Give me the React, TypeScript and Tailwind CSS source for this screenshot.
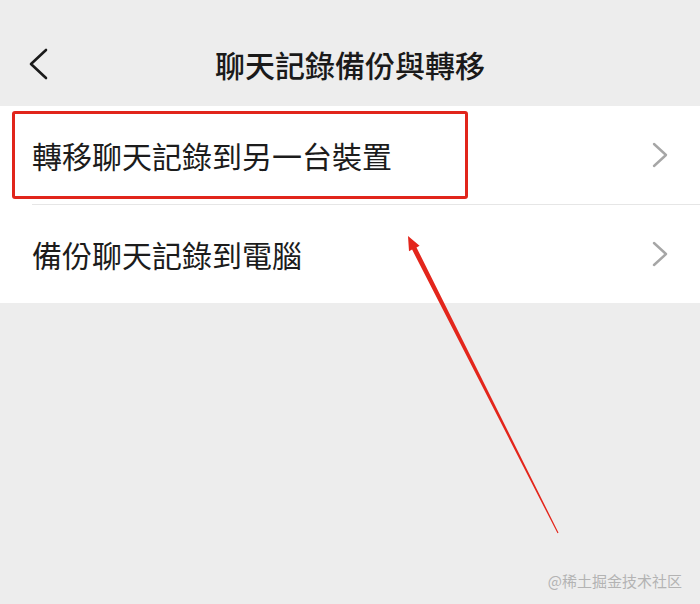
import React from 'react';

const font = { fontFamily: '"Noto Sans CJK TC", "Noto Sans CJK SC", sans-serif' };

function Chevron({ left = false }: { left?: boolean }) {
  if (left) {
    return (
      <svg width="20" height="32" viewBox="0 0 20 32" fill="none">
        <polyline points="17,2 2,16 17,30" stroke="#1a1a1a" strokeWidth="2.6" strokeLinecap="round" strokeLinejoin="round" />
      </svg>
    );
  }
  return (
    <svg width="16" height="26" viewBox="0 0 16 26" fill="none">
      <polyline points="2,2 14,13 2,24" stroke="#a6a6a6" strokeWidth="2.4" strokeLinecap="round" strokeLinejoin="round" />
    </svg>
  );
}

const rows = ['轉移聊天記錄到另一台裝置', '備份聊天記錄到電腦'];

export default function App() {
  return (
    <div className="relative flex h-[604px] w-[700px] flex-col overflow-hidden bg-[#ededed]" style={font}>
      {/* header */}
      <div className="grid h-[106px] grid-cols-[1fr_auto_1fr] items-center px-[29px] pt-[22px]">
        <Chevron left />
        <h1 className="text-[30px] font-medium leading-none text-[#1a1a1a]">聊天記錄備份與轉移</h1>
        <div />
      </div>

      {/* list */}
      <div className="bg-white">
        {rows.map((label, i) => (
          <div key={label}>
            {i > 0 && <div className="ml-[32px] h-px bg-[#e6e6e6]" />}
            <div className="relative flex h-[98px] items-center justify-between px-[32px]">
              <span className="text-[30px] leading-none text-[#1c1c1c]">{label}</span>
              <Chevron />
              {i === 0 && (
                <div className="absolute left-[12px] top-[5px] h-[88px] w-[456px] rounded-[3px] border-[3px] border-[#e1251b]" />
              )}
            </div>
          </div>
        ))}
      </div>

      {/* annotation arrow */}
      <svg className="pointer-events-none absolute left-0 top-0" width="700" height="604" viewBox="0 0 700 604">
        <polygon
          points="408,236 419.6,245.8 416.5,247.4 558.5,532.7 557.5,533.3 412.1,249.6 409,251.2"
          fill="#e3261c"
        />
      </svg>

      {/* watermark */}
      <div className="absolute bottom-[16px] right-[18px] text-[15px] leading-none text-[#b3b3b3]">@稀土掘金技术社区</div>
    </div>
  );
}
